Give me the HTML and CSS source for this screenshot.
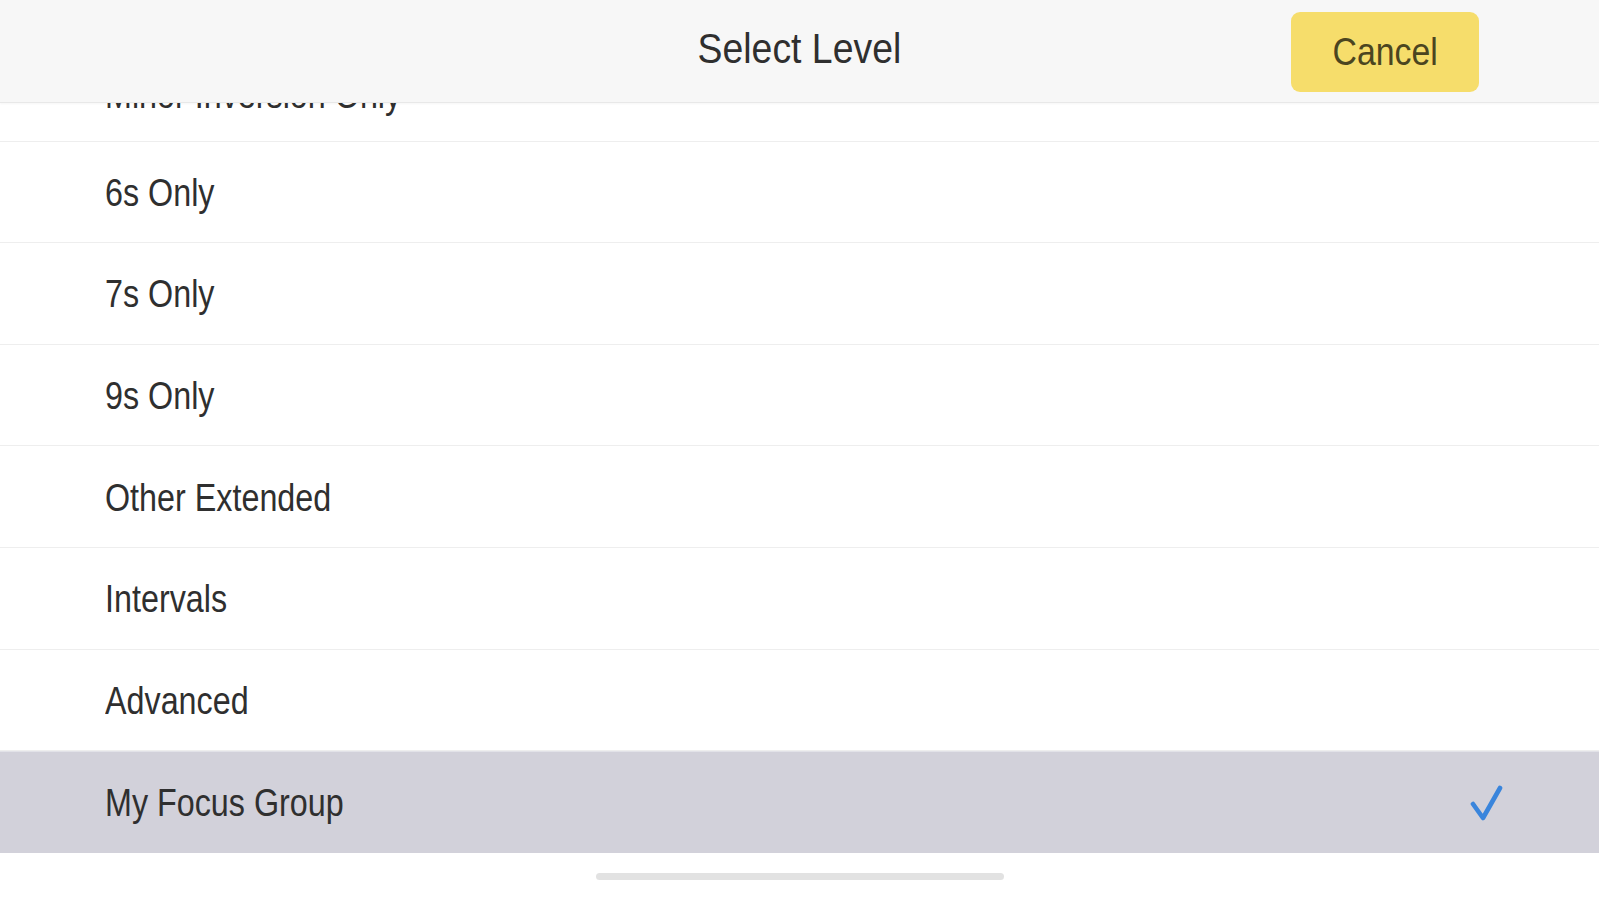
FILE: index.html
```html
<!DOCTYPE html>
<html lang="en">
<head>
<meta charset="utf-8">
<title>Select Level</title>
<link rel="stylesheet" href="styles.css">
</head>
<body>
<div class="screen">
  <header class="topbar">
    <h1 class="title"><span class="squeeze">Select Level</span></h1>
    <button class="cancel"><span class="squeeze">Cancel</span></button>
  </header>
  <ul class="list">
    <li class="row partial"><span class="label">Minor Inversion Only</span></li>
    <li class="row"><span class="label">6s Only</span></li>
    <li class="row"><span class="label">7s Only</span></li>
    <li class="row"><span class="label">9s Only</span></li>
    <li class="row"><span class="label">Other Extended</span></li>
    <li class="row"><span class="label">Intervals</span></li>
    <li class="row"><span class="label">Advanced</span></li>
    <li class="row selected"><span class="label">My Focus Group</span>
      <svg class="check" width="34" height="38" viewBox="0 0 34 38"><path d="M4 19 L14 33 L31 3" fill="none" stroke="#3a85dc" stroke-width="4.6" stroke-linecap="round" stroke-linejoin="round"/></svg>
    </li>
  </ul>
  <div class="home-bar"><div class="home-indicator"></div></div>
</div>
</body>
</html>
```
FILE: styles.css
```css
* { box-sizing: border-box; }
html, body { margin: 0; padding: 0; background: #ffffff; }
body { font-family: "Liberation Sans", Arial, Helvetica, sans-serif; color: #2e2e2e; }

.screen {
  position: relative;
  width: 1599px;
  height: 900px;
  overflow: hidden;
  background: #ffffff;
}

.topbar {
  position: absolute;
  top: 0;
  left: 0;
  right: 0;
  height: 103px;
  background: #f7f7f7;
  border-bottom: 1px solid #e8e8e8;
  box-shadow: 0 1px 2px rgba(0,0,0,0.04);
  display: flex;
  align-items: center;
  justify-content: center;
  z-index: 2;
}

.title {
  margin: 0;
  font-size: 42px;
  font-weight: 400;
  color: #2f2f2f;
  line-height: 1;
  margin-top: -4px;
}

.squeeze {
  display: inline-block;
  transform: scaleX(0.89);
  transform-origin: center center;
}

.cancel {
  position: absolute;
  left: 1291px;
  top: 12px;
  width: 188px;
  height: 80px;
  border: none;
  border-radius: 9px;
  background: #f6dd6b;
  color: #4b4520;
  font-family: "Liberation Sans", Arial, Helvetica, sans-serif;
  font-size: 38px;
  line-height: 1;
  padding: 0;
  display: flex;
  align-items: center;
  justify-content: center;
}

.list {
  list-style: none;
  margin: 0;
  padding: 40px 0 0 0;
}

.row {
  height: 101.6px;
  border-bottom: 1.5px solid #eeeeee;
  display: flex;
  align-items: center;
  padding-left: 105px;
  padding-right: 96px;
  padding-top: 2px;
}

.partial { padding-top: 9px; }

.label {
  display: inline-block;
  font-size: 38px;
  line-height: 1;
  color: #2f2f2f;
  transform: scaleX(0.85);
  transform-origin: left center;
  white-space: nowrap;
}

.selected {
  background: #d2d1da;
  border-bottom: none;
  border-top: 1px solid #e2e2e8;
  justify-content: space-between;
}

.check { display: block; margin-top: 2px; }

.home-bar {
  display: flex;
  justify-content: center;
  padding-top: 20px;
}

.home-indicator {
  width: 408px;
  height: 7px;
  border-radius: 4px;
  background: #e2e2e2;
}
```
